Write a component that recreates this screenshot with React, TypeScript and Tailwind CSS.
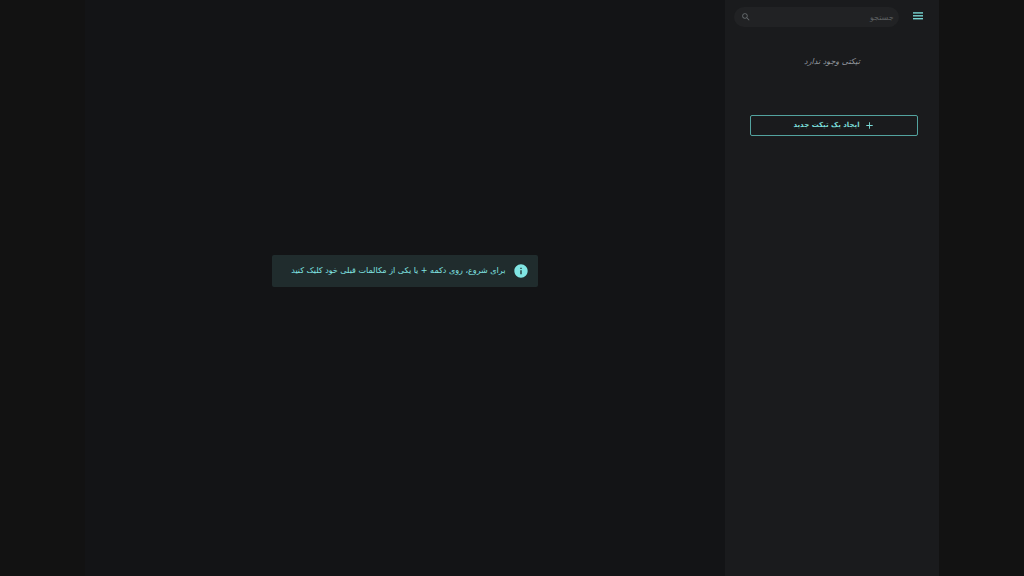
import { MdAdd, MdInfo, MdSearch } from 'react-icons/md'

function MenuIcon() {
  return (
    <svg viewBox="0 0 10 8" className="h-2 w-[10px]" fill="currentColor" aria-hidden="true">
      <rect y="0.2" width="10" height="1.4" />
      <rect y="3.1" width="10" height="1.4" />
      <rect y="6" width="10" height="1.4" />
    </svg>
  )
}

function SearchBar() {
  return (
    <div className="flex items-start gap-[14px] pl-[9px] pr-4">
      <button type="button" aria-label="منو" className="pt-[5px] text-[#76d4d1]">
        <MenuIcon />
      </button>
      <form role="search" className="flex h-5 min-w-0 flex-1 items-center rounded-full bg-[#212224] pl-[7px] pr-[5px]">
        <input
          type="search"
          aria-label="جستجو"
          placeholder="جستجو"
          className="min-w-0 flex-1 bg-transparent pt-px text-[8px] leading-4 text-gray-300 outline-none placeholder:text-[#5d6062]"
        />
        <button type="submit" aria-label="جستجو" className="text-[#666b6e]">
          <MdSearch className="h-[10px] w-[10px]" aria-hidden="true" />
        </button>
      </form>
    </div>
  )
}

function Sidebar() {
  return (
    <aside className="w-1/4 bg-[#1a1b1d] pt-[7px]">
      <SearchBar />
      <p className="mt-7 text-center text-[8px] leading-[14px] text-[#92989d] italic">تیکتی وجود ندارد</p>
      <div className="mt-[46px] pl-[25px] pr-[21px]">
        <button
          type="button"
          className="flex h-[21px] w-full items-center justify-center gap-1 rounded-xs border border-[#53a39f] text-[7px] font-bold text-[#79dbd7]"
        >
          <MdAdd className="h-[11px] w-[11px]" aria-hidden="true" />
          ایجاد یک تیکت جدید
        </button>
      </div>
    </aside>
  )
}

export default function App() {
  return (
    <div dir="rtl" className="flex min-h-screen justify-center bg-[#121212] font-['DejaVu_Sans',sans-serif]">
      <div className="flex w-10/12">
        <Sidebar />
        <main className="flex flex-1 items-center justify-center bg-[#131416] pb-[34px]">
          <div
            role="status"
            className="flex h-8 items-center gap-2 rounded-xs bg-[#202c2d] pl-[19px] pr-[9px] text-[8px] text-[#80e5e3]"
          >
            <MdInfo className="h-4 w-4" aria-hidden="true" />
            <p>برای شروع، روی دکمه + یا یکی از مکالمات قبلی خود کلیک کنید</p>
          </div>
        </main>
      </div>
    </div>
  )
}
